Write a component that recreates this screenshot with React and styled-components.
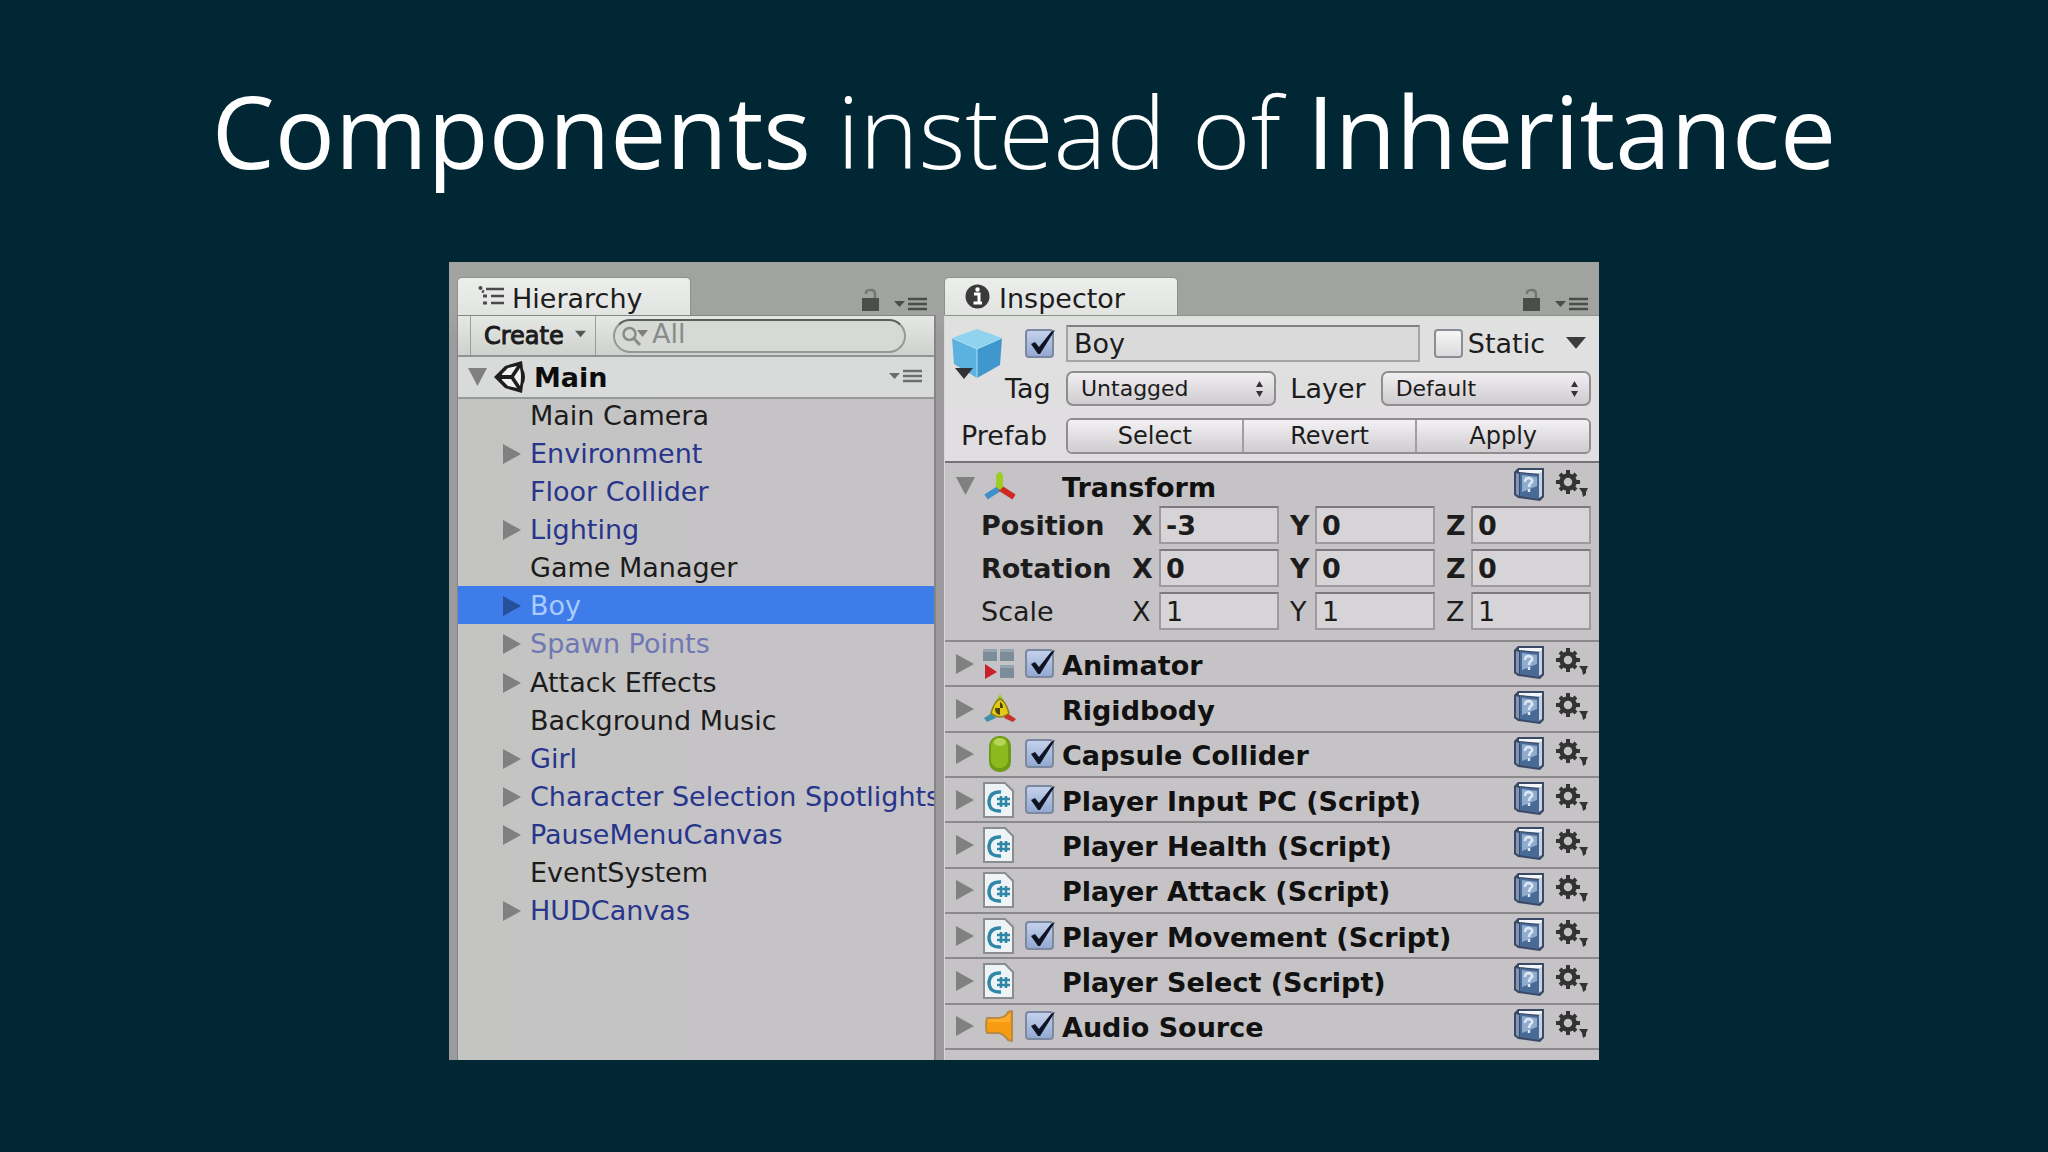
import React from 'react'
import styled, { createGlobalStyle } from 'styled-components'

const GlobalStyle = createGlobalStyle`
  * {
    box-sizing: border-box;
  }
  body {
    margin: 0;
    background: #002733;
    font-family: "DejaVu Sans", Verdana, sans-serif;
    font-size: 27px;
    color: #1c1c1c;
  }
  button, input, select {
    font: inherit;
    color: inherit;
    margin: 0;
  }
`

const Slide = styled.main`
  display: flex;
  flex-direction: column;
  align-items: center;
  gap: 52px;
  padding: 50px 24px 90px;
`

const Title = styled.h1`
  margin: 0;
  font-family: "Open Sans", "Noto Sans", sans-serif;
  font-size: 100px;
  line-height: 160px;
  font-weight: 400;
  color: #fff;
  text-align: center;
`

const Light = styled.span`
  font-weight: 300;
`

const Editor = styled.div`
  display: grid;
  grid-template-columns: 479fr 655fr;
  gap: 8px;
  width: 100%;
  max-width: 1150px;
  min-height: 798px;
  padding: 15px 0 0 8px;
  background: linear-gradient(#a1a3a1 52px, #9c9a9c 80px);
`

const Panel = styled.section`
  display: flex;
  flex-direction: column;
  min-width: 0;
`

const TabBar = styled.div`
  display: flex;
  align-items: flex-end;
  gap: 14px;
  height: 38px;
  padding-right: ${p => p.$right}px;
`

const Tab = styled.button`
  display: flex;
  align-items: center;
  gap: ${p => p.$gap}px;
  width: 234px;
  height: 38px;
  margin-right: auto;
  padding: 4px 0 0 20px;
  border: 1px solid #8e908e;
  border-bottom: 0;
  border-radius: 5px 5px 0 0;
  background: linear-gradient(#eceeec, #e2e4e2);
  svg {
    flex: none;
    margin-bottom: 5px;
  }
`

const IconButton = styled.button`
  display: flex;
  flex: none;
  padding: 0 0 3px;
  border: 0;
  background: none;
`

const HierarchyBody = styled.div`
  flex: 1;
  border: 1px solid #858585;
  border-width: 1px 2px 0 1px;
  background: linear-gradient(90deg, #c3c5c2, #c5c3c5 50%);
  overflow: hidden;
`

const Toolbar = styled.div`
  display: flex;
  align-items: center;
  height: 41px;
  padding: 0 28px 0 12px;
  border-bottom: 2px solid #929492;
  background: linear-gradient(#e6e8e6, #cfd1cf);
`

const CreateButton = styled.button`
  display: flex;
  flex: none;
  align-items: center;
  justify-content: space-between;
  width: 126px;
  height: 100%;
  margin-right: 17px;
  padding: 0 9px 0 13px;
  border: 1px solid #9a9c9a;
  border-width: 0 1px;
  background: none;
  font-size: 24px;
  -webkit-text-stroke: 1px #1c1c1c;
  svg {
    margin-bottom: 5px;
  }
`

const Search = styled.label`
  display: flex;
  flex: 1;
  align-items: center;
  gap: 3px;
  min-width: 0;
  height: 34px;
  padding: 0 7px;
  border: 2px solid #969896;
  border-top-color: #5c5e5c;
  border-radius: 17px;
  background: #d7d9d7;
  svg {
    flex: none;
  }
`

const SearchInput = styled.input`
  flex: 1;
  min-width: 0;
  height: 30px;
  padding: 0 0 4px;
  border: 0;
  background: none;
  outline: none;
  &::placeholder {
    color: #8a8c8a;
    opacity: 1;
  }
`

const SceneRow = styled.div`
  display: flex;
  align-items: center;
  height: 42px;
  padding: 0 11px 0 9px;
  border-bottom: 2px solid #989a98;
  background: #d9dbda;
`

const SceneName = styled.strong`
  flex: 1;
  margin-left: 7px;
  color: #0c0c0c;
`

const ObjectList = styled.ul`
  display: grid;
  grid-auto-rows: 1fr;
  min-height: 534px;
  margin: -4px 0 0;
  padding: 0;
  list-style: none;
`

const tones = {
  plain: '#1c1c1c',
  prefab: '#27358c',
  muted: '#6f78b4',
  selected: '#a9cbff',
}

const ObjectRow = styled.li`
  display: flex;
  align-items: center;
  padding: 3px 0 0 44px;
  line-height: 32px;
  color: ${p => tones[p.$tone]};
  background: ${p => (p.$tone === 'selected' ? '#3e7ce9' : 'transparent')};
  white-space: nowrap;
`

const Fold = styled.button`
  display: flex;
  flex: none;
  width: ${p => p.$width || 28}px;
  padding: 0;
  border: 0;
  background: none;
`

const InspectorBody = styled.div`
  flex: 1;
  border-top: 1px solid #8e908e;
  border-left: 1px solid #d8d8d8;
  background: #c5c3c5;
`

const ObjectHeader = styled.div`
  display: grid;
  grid-template-columns: 60px 52px minmax(0, 1fr);
  grid-template-rows: 37px 35px 41px;
  row-gap: 9px;
  padding: 9px 8px 5px 0;
  border-bottom: 2px solid #757375;
  background: linear-gradient(#dfe1df, #e1dde1);
`

const CubeCell = styled.div`
  grid-row: 1 / 3;
  padding: 3px 0 0 6px;
`

const HeaderCell = styled.div`
  display: flex;
  align-items: center;
  grid-column: ${p => p.$column};
  padding-left: ${p => p.$left || 0}px;
  padding-right: ${p => p.$right || 0}px;
`

const FieldLabel = styled.label`
  flex: none;
  margin: 0 ${p => p.$right || 0}px 0 ${p => p.$left || 0}px;
`

const NameInput = styled.input`
  flex: 1;
  min-width: 0;
  height: 37px;
  padding: 0 6px;
  border: 2px solid #a5a5a5;
  border-top-color: #808080;
  border-radius: 0;
  background: #dadada;
  outline: none;
`

const CheckWrap = styled.span`
  display: grid;
  flex: none;
  width: 30px;
  height: 30px;
  > * {
    grid-area: 1 / 1;
  }
  svg {
    pointer-events: none;
  }
`

const CheckInput = styled.input`
  appearance: none;
  width: 29px;
  height: 29px;
  border: 2px solid #8c8c94;
  border-radius: 4px;
  background: linear-gradient(#f6f6f6, #dcdadc);
  &:checked {
    border-color: #7c87a0;
    background: linear-gradient(#c3d1ec, #94a9d2);
  }
`

const SelectWrap = styled.span`
  display: grid;
  flex: 1;
  align-items: center;
  min-width: 0;
  > * {
    grid-area: 1 / 1;
  }
  svg {
    justify-self: end;
    margin-right: 12px;
    pointer-events: none;
  }
`

const SelectInput = styled.select`
  appearance: none;
  width: 100%;
  height: 35px;
  padding: 0 28px 0 13px;
  border: 2px solid #8f8d8f;
  border-radius: 7px;
  background: linear-gradient(#f1eff1, #cfcccf);
  font-size: 22px;
`

const ButtonGroup = styled.div`
  display: grid;
  flex: 1;
  grid-template-columns: repeat(3, 1fr);
  height: 36px;
  border: 2px solid #8f8d8f;
  border-radius: 6px;
  overflow: hidden;
`

const GroupButton = styled.button`
  padding: 0;
  border: 0;
  background: linear-gradient(#f3f1f3, #cfcccf);
  font-size: 24px;
  line-height: 28px;
  & + & {
    border-left: 2px solid #a09ea0;
  }
`

const ComponentHeader = styled.div`
  display: flex;
  align-items: center;
  padding: 0 10px 0 10px;
`

const IconSlot = styled.span`
  display: flex;
  flex: none;
  width: 42px;
`

const CheckSlot = styled.span`
  display: flex;
  flex: none;
  width: 37px;
`

const ComponentName = styled.label`
  flex: 1;
  padding-top: 4px;
  line-height: 30px;
  font-weight: 700;
  color: #111;
  white-space: nowrap;
`

const Tools = styled.span`
  display: flex;
  align-items: center;
  gap: 11px;
`

const TransformBlock = styled.div`
  padding: 4px 0 10px;
  border-bottom: 2px solid #8b898b;
`

const VectorRow = styled.div`
  display: grid;
  grid-template-columns: 151px 27px 1fr 36px 1fr 36px 1fr;
  align-items: center;
  height: 38px;
  margin-top: 5px;
  padding: 0 8px 0 36px;
  font-weight: ${p => (p.$bold ? 700 : 400)};
  &:nth-child(2) {
    margin-top: 2px;
  }
`

const Axis = styled.label`
  padding-left: ${p => (p.$first ? 0 : 11)}px;
`

const VectorInput = styled.input`
  width: 100%;
  min-width: 0;
  height: 38px;
  padding: 0 5px;
  border: 2px solid #9c9a9c;
  border-top-color: #7c7a7c;
  border-radius: 0;
  background: #d6d4d6;
  outline: none;
`

const ComponentList = styled.div`
  display: grid;
  grid-auto-rows: 1fr;
  min-height: 408px;
`

const ComponentRow = styled(ComponentHeader)`
  border-bottom: 2px solid #8b898b;
`

function RightTriangle({ color = '#7f807f' }) {
  return (
    <svg width="20" height="22" viewBox="0 0 20 22" aria-hidden="true">
      <path d="M1 1L19 11L1 21Z" fill={color} />
    </svg>
  )
}

function DownTriangle() {
  return (
    <svg width="21" height="20" viewBox="0 0 21 20" aria-hidden="true">
      <path d="M1 1H20L10.5 19Z" fill="#7f807f" />
    </svg>
  )
}

function SmallArrow({ size = 11, color = '#555755' }) {
  return (
    <svg width={size} height={size} viewBox="0 0 12 12" aria-hidden="true">
      <path d="M0 3H12L6 10Z" fill={color} />
    </svg>
  )
}

function LockIcon() {
  return (
    <svg width="19" height="24" viewBox="0 0 19 24" aria-hidden="true">
      <path d="M5 6V4Q6 2 9.5 2Q14 2 14 6V11" fill="none" stroke="#747674" strokeWidth="2.5" />
      <rect x="1" y="10" width="17" height="13" fill="#4b4d4b" />
    </svg>
  )
}

function MenuIcon({ color = '#4b4d4b' }) {
  return (
    <svg width="34" height="16" viewBox="0 0 34 16" aria-hidden="true">
      <path d="M0 5H11L5.5 11Z" fill={color} />
      <path d="M14 3H33M14 8H33M14 13H33" stroke={color} strokeWidth="2.5" />
    </svg>
  )
}

function HierarchyIcon() {
  return (
    <svg width="27" height="22" viewBox="0 0 27 22" aria-hidden="true">
      <path d="M8 4H26M13 11H26M13 18H26" stroke="#4a4a4a" strokeWidth="2.5" />
      <circle cx="2.5" cy="3" r="2" fill="#4a4a4a" />
      <path d="M5 11H9M5 18H9M4 6L6 7" stroke="#4a4a4a" strokeWidth="3" />
    </svg>
  )
}

function InfoIcon() {
  return (
    <svg width="25" height="25" viewBox="0 0 25 25" aria-hidden="true">
      <circle cx="12.5" cy="12.5" r="12" fill="#3a3a3a" />
      <path d="M9 10H14V18M8.5 19H17" stroke="#fff" strokeWidth="3" fill="none" />
      <circle cx="12.5" cy="5.5" r="2.2" fill="#fff" />
    </svg>
  )
}

function SearchIcon() {
  return (
    <svg width="27" height="20" viewBox="0 0 27 20" aria-hidden="true">
      <circle cx="7.5" cy="8" r="6" fill="none" stroke="#8a8c8a" strokeWidth="2.5" />
      <path d="M11.5 12L18 19" stroke="#8a8c8a" strokeWidth="3" />
      <path d="M15 4H26L20.5 11Z" fill="#7d7f7d" />
    </svg>
  )
}

function SceneIcon() {
  return (
    <svg width="34" height="34" viewBox="0 0 34 34" aria-hidden="true">
      <path d="M1 17L12 6L29 1L30 9Q34 17 30 25L29 33L12 28Z" fill="#1e1e1e" />
      <path d="M9 14L15 8L24 6L18 15H9Z" fill="#f1f2f1" />
      <path d="M9 20L15 26L24 28L18 19H9Z" fill="#f1f2f1" />
      <path d="M21 17L27 8Q29 17 27 26Z" fill="#f1f2f1" />
    </svg>
  )
}

function CubeIcon() {
  return (
    <svg width="52" height="52" viewBox="0 0 52 52" aria-hidden="true">
      <path d="M1 10L26 1L51 10L26 21Z" fill="#8fd3ef" />
      <path d="M1 10L26 21V50L3 36Z" fill="#5bb2e0" />
      <path d="M51 10L26 21V50L49 37Z" fill="#3f97cd" />
      <path d="M1 10L26 21L51 10M26 21V50" fill="none" stroke="#a8dff5" strokeWidth="1" />
      <path d="M4 40H22L13 51Z" fill="#303234" />
    </svg>
  )
}

function CheckMark() {
  return (
    <svg width="32" height="30" viewBox="0 0 32 30" aria-hidden="true">
      <path d="M6 15L10 13L14 18L26 3L30 1L15 25H13Z" fill="#0e1424" />
    </svg>
  )
}

function PopupArrows() {
  return (
    <svg width="9" height="18" viewBox="0 0 9 18" aria-hidden="true">
      <path d="M1 7L4.5 1L8 7ZM1 11L4.5 17L8 11Z" fill="#333" />
    </svg>
  )
}

function HelpIcon() {
  return (
    <svg width="32" height="34" viewBox="0 0 32 34" aria-hidden="true">
      <path d="M5 1H31V30L27 34L5 31L1 28V5Z" fill="#3a4a66" />
      <path d="M6 3H29V7L6 5Z" fill="#f2f5fa" />
      <path d="M26 6L29 5V29L26 31Z" fill="#c4d2e4" />
      <path d="M3 6L6 7V29L3 27Z" fill="#8096b6" />
      <path d="M7 6L26 8V32L7 29Z" fill="#4a6a96" />
      <path d="M9 8L24 10V19L9 25Z" fill="#8fabcd" />
      <path d="M12 15Q12 11 16 11Q20 12 19 15Q16 17 16 20M16 22V25" fill="none" stroke="#dce8f5" strokeWidth="2.5" />
    </svg>
  )
}

function GearIcon() {
  return (
    <svg width="33" height="28" viewBox="0 0 33 28" aria-hidden="true">
      <circle cx="12" cy="12" r="6.5" fill="none" stroke="#333" strokeWidth="4.5" />
      <path
        d="M12 0V5M12 19V24M0 12H5M19 12H24M4 4L7 7M17 17L20 20M20 4L17 7M4 20L7 17"
        stroke="#333"
        strokeWidth="4"
      />
      <path d="M23 18H32L30 22V25L27 27L26 22Z" fill="#333" />
    </svg>
  )
}

function TransformIcon() {
  return (
    <svg width="34" height="30" viewBox="0 0 34 30" aria-hidden="true">
      <path d="M17 17L3 26" stroke="#3f8fca" strokeWidth="6" />
      <path d="M17 17L31 26" stroke="#cf2a22" strokeWidth="6" />
      <path d="M13 4L17 0L20 4V16L17 19L13 16Z" fill="#9fcc22" />
    </svg>
  )
}

function AnimatorIcon() {
  return (
    <svg width="31" height="31" viewBox="0 0 31 31" aria-hidden="true">
      <path d="M0 1H14V13H0ZM17 1H31V13H17ZM17 17H31V30H17Z" fill="#7c8d99" />
      <path d="M0 1H14V4H0ZM17 1H31V4H17ZM17 17H31V20H17Z" fill="#95a5b0" />
      <path d="M2 16L14 24L2 31Z" fill="#c9202c" />
    </svg>
  )
}

function RigidbodyIcon() {
  return (
    <svg width="34" height="29" viewBox="0 0 34 29" aria-hidden="true">
      <path d="M13 7L17 0L21 7Z" fill="#9fc531" />
      <path d="M9 19L1 24L4 28L13 24Z" fill="#3f93a8" />
      <path d="M24 19L33 25L30 28L21 24Z" fill="#c5312b" />
      <path d="M17 5Q22 6 26 19Q17 27 8 19Q12 6 17 5Z" fill="#e6c913" stroke="#8a7c1c" strokeWidth="1.5" />
      <path d="M17 8Q20 9 20 14H17ZM17 14V21Q12 20 12 14Z" fill="#4a4410" />
    </svg>
  )
}

function CapsuleIcon() {
  return (
    <svg width="34" height="36" viewBox="0 0 34 36" aria-hidden="true">
      <rect x="6" y="0" width="22" height="36" rx="10" fill="#6f9a18" />
      <rect x="8" y="2" width="17" height="30" rx="8" fill="#8cba1e" />
      <ellipse cx="17" cy="6" rx="6" ry="4" fill="#b5d654" />
    </svg>
  )
}

function ScriptIcon() {
  return (
    <svg width="32" height="36" viewBox="0 0 32 36" aria-hidden="true">
      <path d="M1 1H22L30 9V35H1Z" fill="#eef3f5" stroke="#8a8c8e" strokeWidth="2" />
      <path d="M18 10Q7 9 6 19Q6 30 18 29" fill="none" stroke="#2f87a8" strokeWidth="3.5" />
      <path d="M18 14V25M23 14V25M14 17H27M14 22H27" stroke="#2f87a8" strokeWidth="2.5" />
    </svg>
  )
}

function AudioIcon() {
  return (
    <svg width="32" height="33" viewBox="0 0 32 33" aria-hidden="true">
      <path
        d="M4 8H16Q23 7 25 2L29 1V31L25 30Q22 25 16 23H4Q2 16 4 8Z"
        fill="#f79c10"
        stroke="#b98a45"
        strokeWidth="2"
        strokeLinejoin="round"
      />
      <path d="M5 9H16Q24 8 27 3V12H5Z" fill="#ffae28" />
    </svg>
  )
}

function Checkbox({ id, checked = false, label }) {
  return (
    <CheckWrap>
      <CheckInput id={id} type="checkbox" defaultChecked={checked} aria-label={label} />
      {checked && <CheckMark />}
    </CheckWrap>
  )
}

function Popup({ id, value }) {
  return (
    <SelectWrap>
      <SelectInput id={id} defaultValue={value}>
        <option>{value}</option>
      </SelectInput>
      <PopupArrows />
    </SelectWrap>
  )
}

function ComponentTools({ name }) {
  return (
    <Tools>
      <IconButton aria-label={`${name} help`}><HelpIcon /></IconButton>
      <IconButton aria-label={`${name} settings`}><GearIcon /></IconButton>
    </Tools>
  )
}

const objects = [
  { name: 'Main Camera', tone: 'plain' },
  { name: 'Environment', tone: 'prefab', fold: true },
  { name: 'Floor Collider', tone: 'prefab' },
  { name: 'Lighting', tone: 'prefab', fold: true },
  { name: 'Game Manager', tone: 'plain' },
  { name: 'Boy', tone: 'selected', fold: true },
  { name: 'Spawn Points', tone: 'muted', fold: true },
  { name: 'Attack Effects', tone: 'plain', fold: true },
  { name: 'Background Music', tone: 'plain' },
  { name: 'Girl', tone: 'prefab', fold: true },
  { name: 'Character Selection Spotlights', tone: 'prefab', fold: true },
  { name: 'PauseMenuCanvas', tone: 'prefab', fold: true },
  { name: 'EventSystem', tone: 'plain' },
  { name: 'HUDCanvas', tone: 'prefab', fold: true },
]

const vectors = [
  { name: 'Position', values: ['-3', '0', '0'], bold: true },
  { name: 'Rotation', values: ['0', '0', '0'], bold: true },
  { name: 'Scale', values: ['1', '1', '1'] },
]

const components = [
  { name: 'Animator', Icon: AnimatorIcon, toggle: true },
  { name: 'Rigidbody', Icon: RigidbodyIcon },
  { name: 'Capsule Collider', Icon: CapsuleIcon, toggle: true },
  { name: 'Player Input PC (Script)', Icon: ScriptIcon, toggle: true },
  { name: 'Player Health (Script)', Icon: ScriptIcon },
  { name: 'Player Attack (Script)', Icon: ScriptIcon },
  { name: 'Player Movement (Script)', Icon: ScriptIcon, toggle: true },
  { name: 'Player Select (Script)', Icon: ScriptIcon },
  { name: 'Audio Source', Icon: AudioIcon, toggle: true },
]

function Hierarchy() {
  return (
    <Panel>
      <TabBar $right={8}>
        <Tab $gap={7}><HierarchyIcon />Hierarchy</Tab>
        <IconButton aria-label="Lock hierarchy"><LockIcon /></IconButton>
        <IconButton aria-label="Hierarchy menu"><MenuIcon /></IconButton>
      </TabBar>
      <HierarchyBody>
        <Toolbar>
          <CreateButton>Create<SmallArrow /></CreateButton>
          <Search>
            <SearchIcon />
            <SearchInput type="text" placeholder="All" aria-label="Search objects" />
          </Search>
        </Toolbar>
        <SceneRow>
          <Fold $width={26} aria-label="Toggle Main"><DownTriangle /></Fold>
          <SceneIcon />
          <SceneName>Main</SceneName>
          <IconButton aria-label="Scene menu"><MenuIcon color="#6c6e6c" /></IconButton>
        </SceneRow>
        <ObjectList>
          {objects.map(o => (
            <ObjectRow key={o.name} $tone={o.tone}>
              <Fold as={o.fold ? 'button' : 'span'} aria-label={o.fold ? `Expand ${o.name}` : undefined}>
                {o.fold && <RightTriangle color={o.tone === 'selected' ? '#26509c' : '#7f807f'} />}
              </Fold>
              {o.name}
            </ObjectRow>
          ))}
        </ObjectList>
      </HierarchyBody>
    </Panel>
  )
}

function TransformPanel() {
  return (
    <TransformBlock>
      <ComponentHeader>
        <Fold aria-label="Toggle Transform"><DownTriangle /></Fold>
        <IconSlot><TransformIcon /></IconSlot>
        <CheckSlot />
        <ComponentName as="span">Transform</ComponentName>
        <ComponentTools name="Transform" />
      </ComponentHeader>
      {vectors.map(v => (
        <VectorRow key={v.name} $bold={v.bold}>
          <span>{v.name}</span>
          {['X', 'Y', 'Z'].map((axis, i) => (
            <React.Fragment key={axis}>
              <Axis htmlFor={v.name + axis} $first={i === 0}>{axis}</Axis>
              <VectorInput id={v.name + axis} type="text" defaultValue={v.values[i]} />
            </React.Fragment>
          ))}
        </VectorRow>
      ))}
    </TransformBlock>
  )
}

function Inspector() {
  return (
    <Panel>
      <TabBar $right={10}>
        <Tab $gap={9}><InfoIcon />Inspector</Tab>
        <IconButton aria-label="Lock inspector"><LockIcon /></IconButton>
        <IconButton aria-label="Inspector menu"><MenuIcon /></IconButton>
      </TabBar>
      <InspectorBody>
        <ObjectHeader>
          <CubeCell><CubeIcon /></CubeCell>
          <HeaderCell $column="2" $left={20}>
            <Checkbox checked label="Active" />
          </HeaderCell>
          <HeaderCell $column="3" $left={9} $right={5}>
            <NameInput type="text" defaultValue="Boy" aria-label="Name" />
            <FieldLabel as="span" $left={14} $right={4}><Checkbox id="static" /></FieldLabel>
            <FieldLabel htmlFor="static" $right={21}>Static</FieldLabel>
            <IconButton aria-label="Static options"><SmallArrow size={20} color="#3c3c3c" /></IconButton>
          </HeaderCell>
          <HeaderCell $column="2">
            <FieldLabel htmlFor="tag">Tag</FieldLabel>
          </HeaderCell>
          <HeaderCell $column="3" $left={9}>
            <Popup id="tag" value="Untagged" />
            <FieldLabel htmlFor="layer" $left={14} $right={15}>Layer</FieldLabel>
            <Popup id="layer" value="Default" />
          </HeaderCell>
          <HeaderCell $column="1 / 3" $left={16}>Prefab</HeaderCell>
          <HeaderCell $column="3" $left={9}>
            <ButtonGroup>
              <GroupButton>Select</GroupButton>
              <GroupButton>Revert</GroupButton>
              <GroupButton>Apply</GroupButton>
            </ButtonGroup>
          </HeaderCell>
        </ObjectHeader>
        <TransformPanel />
        <ComponentList>
          {components.map(({ name, Icon, toggle }) => (
            <ComponentRow key={name}>
              <Fold aria-label={`Expand ${name}`}><RightTriangle /></Fold>
              <IconSlot><Icon /></IconSlot>
              <CheckSlot>{toggle && <Checkbox id={name} checked />}</CheckSlot>
              <ComponentName as={toggle ? 'label' : 'span'} htmlFor={toggle ? name : undefined}>{name}</ComponentName>
              <ComponentTools name={name} />
            </ComponentRow>
          ))}
        </ComponentList>
      </InspectorBody>
    </Panel>
  )
}

export default function App() {
  return (
    <>
      <GlobalStyle />
      <Slide>
        <Title>Components <Light>instead of</Light> Inheritance</Title>
        <Editor>
          <Hierarchy />
          <Inspector />
        </Editor>
      </Slide>
    </>
  )
}
